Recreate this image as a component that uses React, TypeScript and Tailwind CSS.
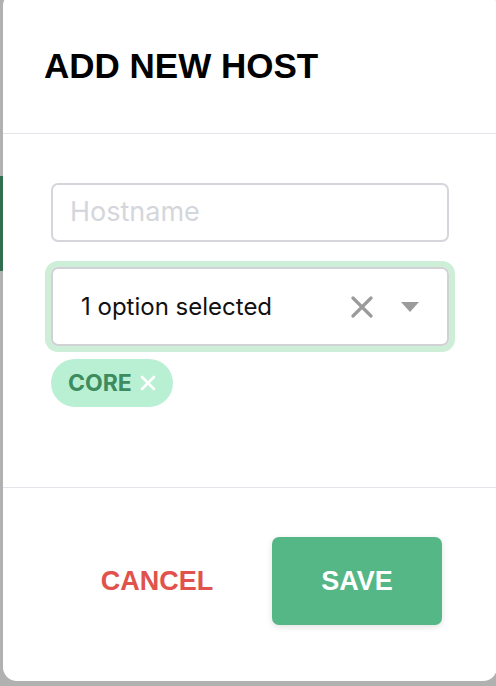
import React from "react";

export default function App() {
  const sans = { fontFamily: '"Liberation Sans", Arial, sans-serif' };
  const inter = { fontFamily: 'Inter, "Noto Sans", sans-serif' };
  return (
    <div className="relative w-[496px] h-[686px] overflow-hidden bg-[#b1b1b1]">
      <div className="absolute left-0 top-[176px] w-[4px] h-[95px] bg-[#2f6f50]" />
      <div className="absolute right-0 top-0 w-[20px] h-[20px] bg-[#2f6f50]" />
      <div className="absolute left-[3px] top-[-8px] right-[-1px] bottom-[5px] bg-white rounded-[14px] flex flex-col">
        <div className="pt-[56px] pb-[50px] px-[41px] border-b border-[#e4e4ea]">
          <h1 className="text-[35px] leading-[35px] font-bold text-black" style={sans}>
            ADD NEW HOST
          </h1>
        </div>
        <div className="pt-[49px] pb-[80px] px-[48px] flex flex-col border-b border-[#e4e4ea]">
          <div
            className="h-[59px] border-2 border-[#d4d6db] rounded-[7px] flex items-center pl-[17px] text-[27px] text-[#d4d6db]"
            style={inter}
          >
            Hostname
          </div>
          <div className="mt-[25px] rounded-[7px] ring-[6px] ring-[#cdeed7]">
            <div className="h-[79px] border-2 border-[#d1d1d6] rounded-[7px] flex items-center pl-[28px] pr-[28px]">
              <span className="flex-1 text-[24px] text-[#111]" style={inter}>
                1 option selected
              </span>
              <svg width="22" height="22" viewBox="0 0 22 22" className="mr-[28px]">
                <path d="M2 2 L20 20 M20 2 L2 20" stroke="#9b9b9b" strokeWidth="3.2" strokeLinecap="round" />
              </svg>
              <svg width="18" height="10" viewBox="0 0 18 10">
                <path d="M0 0 H18 L9 10 Z" fill="#9b9b9b" />
              </svg>
            </div>
          </div>
          <div className="mt-[13px] self-start h-[48px] rounded-full bg-[#b9f0d3] flex items-center pl-[17px] pr-[17px] gap-[8px]">
            <span className="text-[23px] font-bold text-[#3d8c60]" style={inter}>
              CORE
            </span>
            <svg width="16" height="16" viewBox="0 0 16 16">
              <path d="M2 2 L14 14 M14 2 L2 14" stroke="#ffffff" strokeWidth="2.6" strokeLinecap="round" />
            </svg>
          </div>
        </div>
        <div className="pt-[49px] pr-[55px] flex justify-end gap-[30px]">
          <button
            className="w-[170px] h-[88px] text-[27px] font-bold text-[#e0524b]"
            style={sans}
          >
            CANCEL
          </button>
          <button
            className="w-[170px] h-[88px] rounded-[7px] bg-[#55b786] text-[27px] font-bold text-white shadow-[0_2px_6px_rgba(0,0,0,0.12)]"
            style={sans}
          >
            SAVE
          </button>
        </div>
      </div>
    </div>
  );
}
